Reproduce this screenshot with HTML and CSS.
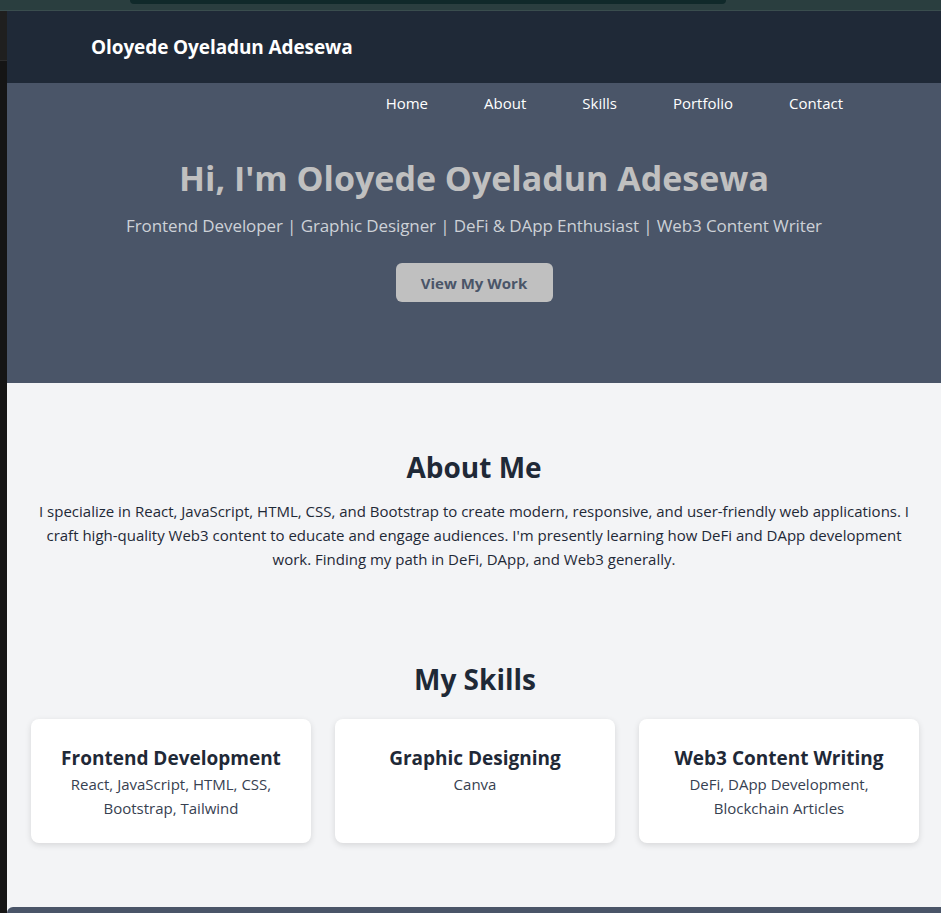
FILE: index.html
```html
<!DOCTYPE html>
<html lang="en">
<head>
<meta charset="utf-8">
<title>Oloyede Oyeladun Adesewa</title>
<link rel="stylesheet" href="styles.css">
</head>
<body>
<div class="chrome-top"><div class="chrome-pill"></div></div>
<div class="frame">
  <div class="chrome-side"><div class="side-tab"></div></div>
  <div class="page">
    <header class="site-header">
      <div class="brand">Oloyede Oyeladun Adesewa</div>
    </header>
    <section class="hero">
      <nav class="nav">
        <a href="#">Home</a>
        <a href="#">About</a>
        <a href="#">Skills</a>
        <a href="#">Portfolio</a>
        <a href="#">Contact</a>
      </nav>
      <h1 class="hero-title">Hi, I'm Oloyede Oyeladun Adesewa</h1>
      <p class="hero-sub">Frontend Developer | Graphic Designer | DeFi &amp; DApp Enthusiast | Web3 Content Writer</p>
      <a class="hero-btn" href="#">View My Work</a>
    </section>
    <main class="main">
      <section class="about">
        <h2 class="section-title">About Me</h2>
        <p class="about-text">I specialize in React, JavaScript, HTML, CSS, and Bootstrap to create modern, responsive, and user-friendly web applications. I craft high-quality Web3 content to educate and engage audiences. I'm presently learning how DeFi and DApp development work. Finding my path in DeFi, DApp, and Web3 generally.</p>
      </section>
      <section class="skills">
        <h2 class="section-title">My Skills</h2>
        <div class="skill-grid">
          <div class="card">
            <h3>Frontend Development</h3>
            <p>React, JavaScript, HTML, CSS, Bootstrap, Tailwind</p>
          </div>
          <div class="card">
            <h3>Graphic Designing</h3>
            <p>Canva</p>
          </div>
          <div class="card">
            <h3>Web3 Content Writing</h3>
            <p>DeFi, DApp Development, Blockchain Articles</p>
          </div>
        </div>
      </section>
      <div class="next-bar"></div>
    </main>
  </div>
</div>
</body>
</html>
```
FILE: styles.css
```css
* { box-sizing: border-box; }
html, body { margin: 0; padding: 0; }
body {
  font-family: "Open Sans", "Noto Sans", sans-serif;
  background: #f3f4f6;
  width: 941px;
  height: 913px;
  overflow: hidden;
}
.chrome-top {
  height: 11px;
  background: #2a3e3f;
  border-bottom: 1px solid #3a4d4e;
  padding-left: 130px;
}
.chrome-pill {
  width: 596px;
  height: 4px;
  background: #10292a;
  border-radius: 0 0 10px 10px;
}
.frame {
  display: flex;
  height: 902px;
}
.chrome-side {
  width: 7px;
  flex: none;
  background: #151515;
}
.side-tab {
  height: 50px;
  background: #1f1f1f;
  border-bottom: 1px solid #2c2c2c;
}
.page {
  flex: 1;
  display: flex;
  flex-direction: column;
  min-width: 0;
}
.site-header {
  height: 72px;
  background: #1f2937;
  display: flex;
  align-items: center;
  padding-left: 84px;
}
.brand {
  color: #ffffff;
  font-weight: 700;
  font-size: 19px;
  letter-spacing: -0.1px;
}
.hero {
  background: #4a5568;
  height: 300px;
  display: flex;
  flex-direction: column;
  align-items: center;
}
.nav {
  align-self: stretch;
  height: 40px;
  display: flex;
  justify-content: flex-end;
  align-items: center;
  gap: 56px;
  padding-right: 98px;
}
.nav a {
  color: #ffffff;
  text-decoration: none;
  font-size: 15px;
}
.hero-title {
  margin: 33px 0 0;
  font-size: 34px;
  line-height: 44px;
  font-weight: 700;
  color: #c0c0c0;
}
.hero-sub {
  margin: 12px 0 0;
  font-size: 17px;
  line-height: 28px;
  letter-spacing: -0.1px;
  color: #cdd1d7;
}
.hero-btn {
  margin-top: 23px;
  width: 157px;
  height: 39px;
  display: flex;
  align-items: center;
  justify-content: center;
  background: #c0c0c0;
  color: #4a5568;
  font-weight: 700;
  font-size: 15px;
  border-radius: 6px;
  text-decoration: none;
}
.main {
  flex: 1;
  display: flex;
  flex-direction: column;
  background: #f3f4f6;
}
.section-title {
  margin: 0;
  text-align: center;
  font-size: 28px;
  line-height: 36px;
  font-weight: 700;
  color: #1f2937;
}
.about {
  padding: 66px 24px 0;
}
.about-text {
  margin: 14px 0 0;
  text-align: center;
  font-size: 15px;
  line-height: 24px;
  color: #1f2937;
}
.skills {
  padding: 90px 22px 0 24px;
}
.skill-grid {
  margin-top: 22px;
  display: grid;
  grid-template-columns: repeat(3, 1fr);
  gap: 24px;
}
.card {
  background: #ffffff;
  border-radius: 8px;
  box-shadow: 0 2px 6px rgba(0, 0, 0, 0.12);
  padding: 25px 24px 24px;
  text-align: center;
  height: 124px;
}
.card h3 {
  margin: 0;
  font-size: 19px;
  line-height: 28px;
  font-weight: 700;
  color: #1f2937;
}
.card p {
  margin: 0;
  font-size: 15px;
  line-height: 24px;
  color: #374151;
}
.next-bar {
  margin-top: 64px;
  flex: 1;
  background: #4a5568;
  border-top-left-radius: 8px;
}
```
